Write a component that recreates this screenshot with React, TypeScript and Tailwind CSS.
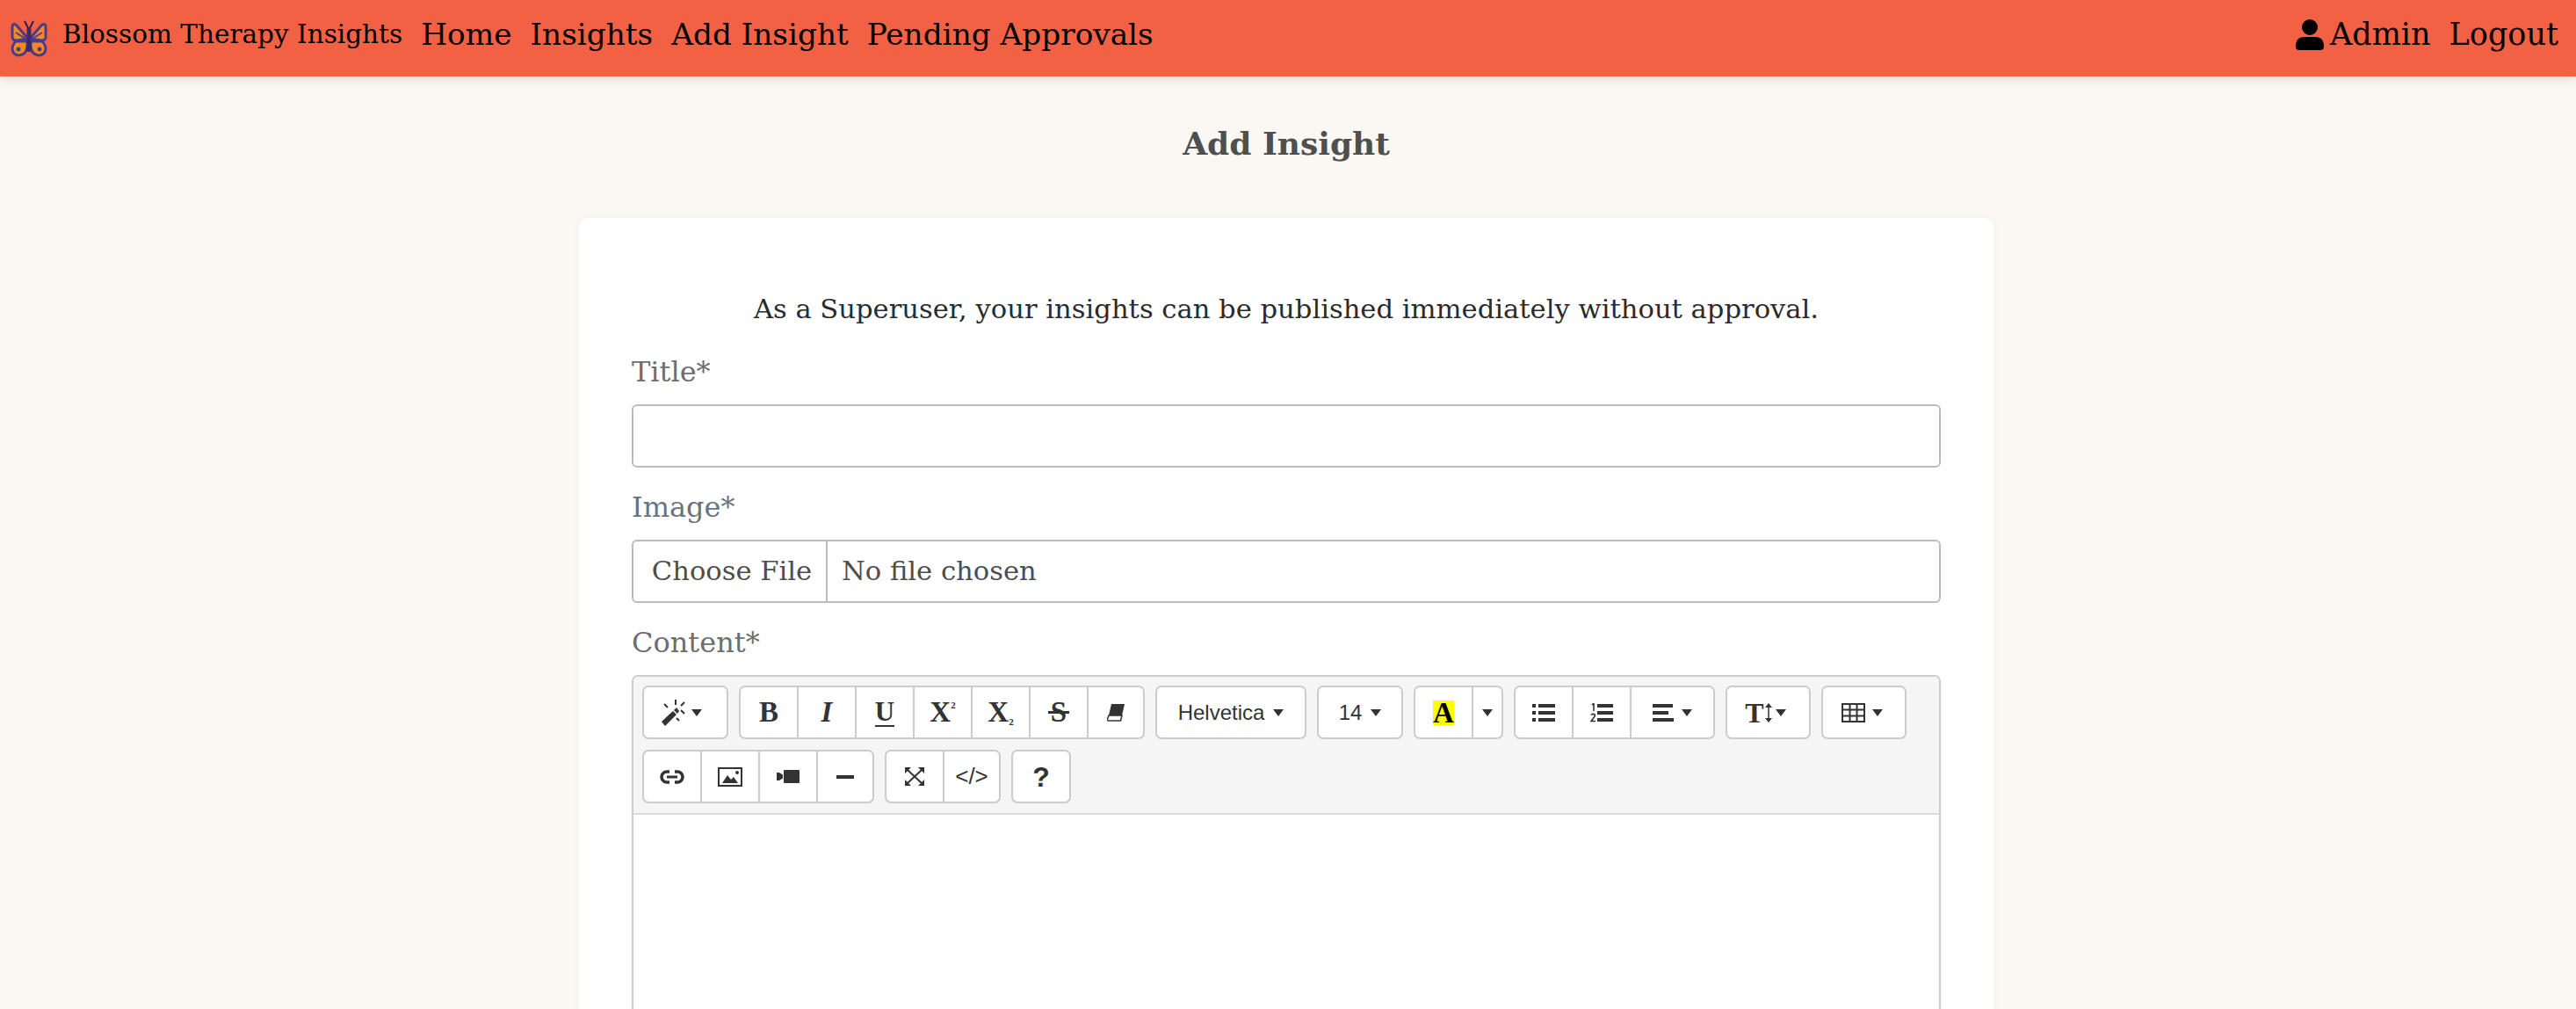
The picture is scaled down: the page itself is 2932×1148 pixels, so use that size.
import React from "react";

const serif = "font-['DejaVu_Serif',serif]";

function Butterfly() {
  return (
    <svg width="42" height="42" viewBox="0 0 42 42" className="shrink-0">
      <path d="M20 21 L6 5 Q2 3 2 8 L2 19 Q2 23 7 23 Z" fill="#f58a1f" stroke="#4b3b8f" strokeWidth="3" strokeLinejoin="round" />
      <path d="M22 21 L36 5 Q40 3 40 8 L40 19 Q40 23 35 23 Z" fill="#f58a1f" stroke="#4b3b8f" strokeWidth="3" strokeLinejoin="round" />
      <path d="M19 24 L6 24 Q2 28 2 33 Q3 40 10 40 Q18 39 19 30 Z" fill="#f58a1f" stroke="#4b3b8f" strokeWidth="3" strokeLinejoin="round" />
      <path d="M23 24 L36 24 Q40 28 40 33 Q39 40 32 40 Q24 39 23 30 Z" fill="#f58a1f" stroke="#4b3b8f" strokeWidth="3" strokeLinejoin="round" />
      <circle cx="9" cy="33" r="2.5" fill="#4b3b8f" />
      <circle cx="33" cy="33" r="2.5" fill="#4b3b8f" />
      <path d="M6 14 L17 21 M36 14 L25 21" stroke="#4b3b8f" strokeWidth="2" />
      <rect x="18.5" y="8" width="5" height="28" rx="2.5" fill="#3b2a6b" />
      <path d="M20 9 L16 1 M22 9 L26 1" stroke="#2d2350" strokeWidth="2" fill="none" />
    </svg>
  );
}

function Caret() {
  return (
    <svg width="12" height="8" viewBox="0 0 12 8" className="shrink-0">
      <polygon points="0,0 12,0 6,8" fill="#333" />
    </svg>
  );
}

function Group({ children, className = "" }: { children: React.ReactNode; className?: string }) {
  return <div className={`flex h-[61px] rounded-[7px] border-2 border-[#ccc] bg-white text-[#333] ${className}`}>{children}</div>;
}

function Btn({ children, className = "" }: { children: React.ReactNode; className?: string }) {
  return <div className={`flex h-full shrink-0 items-center justify-center ${className}`}>{children}</div>;
}

const iconText = "font-['Liberation_Serif',serif] font-bold text-[#333] leading-none";

function ListUl() {
  return (
    <svg width="26" height="20" viewBox="0 0 26 20">
      <path d="M0 0h4v4H0zM0 8h4v4H0zM0 16h4v4H0zM7 0h19v4H7zM7 8h19v4H7zM7 16h19v4H7z" fill="#333" />
    </svg>
  );
}
function ListOl() {
  return (
    <svg width="26" height="22" viewBox="0 0 26 22">
      <path d="M8 1h18v4H8zM8 9h18v4H8zM8 17h18v4H8z" fill="#333" />
      <path d="M2 2l2-1.5V9M1 13.5Q3 11.5 5 13q1 1.500-1 3.500L1 20.500h5" stroke="#333" strokeWidth="1.600" fill="none" />
    </svg>
  );
}

export default function App() {
  return (
    <div className={`h-[1148px] overflow-hidden bg-[#fbf8f3] ${serif}`}>
      <nav className="relative z-10 flex h-[87px] items-center justify-between bg-[#f26144] pb-[8px] pl-[12px] pr-[20px] text-black shadow-[0_4px_12px_rgba(0,0,0,0.1)]">
        <div className="flex items-center">
          <span className="mt-[8px]"><Butterfly /></span>
          <span className="ml-[17px] text-[29.500px]">Blossom Therapy Insights</span>
          <div className="ml-[21px] flex gap-[21px] text-[34.300px]">
            <span>Home</span>
            <span>Insights</span>
            <span>Add Insight</span>
            <span>Pending Approvals</span>
          </div>
        </div>
        <div className="flex items-center text-[35px]">
          <svg width="32" height="35" viewBox="0 0 32 35" className="mr-[7px]">
            <circle cx="16" cy="9" r="9" fill="#000" />
            <path d="M0 31 Q0 20 10 20 L22 20 Q32 20 32 31 Q32 35 28 35 L4 35 Q0 35 0 31Z" fill="#000" />
          </svg>
          <span>Admin</span>
          <span className="ml-[21px]">Logout</span>
        </div>
      </nav>

      <main className="pr-[4px]">
        <h1 className="mt-[52px] text-center text-[36px] leading-[48px] font-bold text-[#4f4f4f]">Add Insight</h1>
        <div className="mx-auto mt-[61px] h-[1000px] w-[1610px] rounded-[10px] bg-white px-[60px] pt-[80px] shadow-[0_2px_8px_rgba(0,0,0,0.05)]">
          <p className="text-center text-[30.600px] leading-[48px] text-[#2b2b2b]">As a Superuser, your insights can be published immediately without approval.</p>

          <div className="mt-[23px]">
            <div className="mb-[13px] text-[32px] leading-[48px] text-[#6e6e6e]">Title*</div>
            <div className="h-[72px] rounded-[6px] border-2 border-[#bbb] bg-white" />
          </div>

          <div className="mt-[21px]">
            <div className="mb-[13px] text-[32px] leading-[48px] text-[#6b7280]">Image*</div>
            <div className="flex h-[72px] items-center rounded-[6px] border-2 border-[#bbb] bg-white text-[30.600px] text-[#4d4d4d]">
              <div className="flex h-full w-[221px] items-center justify-center border-r-2 border-[#bbb] pl-[5px]">Choose File</div>
              <span className="ml-[16px]">No file chosen</span>
            </div>
          </div>

          <div className="mt-[21px]">
            <div className="mb-[13px] text-[32px] leading-[48px] text-[#6e6e6e]">Content*</div>
            <div className="h-[600px] rounded-[7px] border-2 border-[#ccc] bg-white">
              <div className="flex h-[157px] flex-col gap-[12px] rounded-t-[6px] border-b-2 border-[#ddd] bg-[#f5f5f5] pl-[10px] pt-[10px]">
                <div className="flex gap-[12px]">
                  <Group>
                    <Btn className="w-[94px] gap-[6px] pr-[10px]">
                      <svg width="30" height="30" viewBox="0 0 30 30">
                        <path d="M2 25 L15 13 L19 17 L6 30 Z M16 12 L19 9 L22 13 L20 16Z" fill="#333" />
                        <path d="M18 0v6M5 5l4 4M28 3l-4 4M28 16l-4-4M22 24l-3-3" stroke="#333" strokeWidth="2" />
                      </svg>
                      <Caret />
                    </Btn>
                  </Group>
                  <Group>
                    <Btn className="w-[64px]"><span className={`${iconText} text-[33px]`}>B</span></Btn>
                    <Btn className="w-[66px] border-l-2 border-[#ccc]"><span className={`${iconText} text-[33px] italic`}>I</span></Btn>
                    <Btn className="w-[66px] border-l-2 border-[#ccc]"><span className={`${iconText} border-b-2 border-[#333] text-[31px]`}>U</span></Btn>
                    <Btn className="w-[66px] border-l-2 border-[#ccc]"><span className={`${iconText} flex items-start text-[33px]`}>X<span className="text-[11px] leading-[16px]">2</span></span></Btn>
                    <Btn className="w-[66px] border-l-2 border-[#ccc]"><span className={`${iconText} flex items-end text-[33px]`}>X<span className="text-[11px] leading-[11px]">2</span></span></Btn>
                    <Btn className="relative w-[66px] border-l-2 border-[#ccc]">
                      <span className={`${iconText} text-[33px]`}>S</span>
                      <span className="absolute left-[20px] top-[27px] h-[3px] w-[24px] bg-[#333]" />
                    </Btn>
                    <Btn className="w-[64px] border-l-2 border-[#ccc]">
                      <svg width="20" height="20" viewBox="0 0 20 20">
                        <path d="M5 0 L20 0 L17 13 L2 13 Z" fill="#333" />
                        <path d="M2 13 L17 13 L15.500 19 L2 19 Q0 19 0.500 17 Z" fill="#fff" stroke="#333" strokeWidth="1.500" />
                      </svg>
                    </Btn>
                  </Group>
                  <Group>
                    <Btn className="w-[168px] gap-[10px] font-['Liberation_Sans',sans-serif] text-[24px]">Helvetica<Caret /></Btn>
                  </Group>
                  <Group>
                    <Btn className="w-[94px] gap-[10px] font-['Liberation_Sans',sans-serif] text-[24px]">14<Caret /></Btn>
                  </Group>
                  <Group>
                    <Btn className="w-[64px]">
                      <span className="flex h-[28px] w-[24px] items-end justify-center bg-[#ff0] font-['Liberation_Serif',serif] text-[33px] leading-[28px] font-bold text-black">A</span>
                    </Btn>
                    <Btn className="w-[34px] border-l-2 border-[#ccc]"><Caret /></Btn>
                  </Group>
                  <Group>
                    <Btn className="w-[64px]"><ListUl /></Btn>
                    <Btn className="w-[66px] border-l-2 border-[#ccc]"><ListOl /></Btn>
                    <Btn className="w-[95px] gap-[9px] border-l-2 border-[#ccc]">
                      <svg width="24" height="20" viewBox="0 0 24 20"><path d="M0 0h23v4H0zM0 8h18v4H0zM0 16h24v4H0z" fill="#333" /></svg>
                      <Caret />
                    </Btn>
                  </Group>
                  <Group>
                    <Btn className="w-[93px] gap-[4px] pr-[6px]">
                      <span className={`${iconText} text-[32px]`}>T</span>
                      <svg width="8" height="22" viewBox="0 0 8 22" className="-ml-[3px]"><path d="M4 3v16" stroke="#333" strokeWidth="1.500" /><path d="M0 5 L4 0 L8 5Z M0 17 L4 22 L8 17Z" fill="#333" /></svg>
                      <Caret />
                    </Btn>
                  </Group>
                  <Group>
                    <Btn className="w-[93px] gap-[8px] pr-[4px]">
                      <svg width="27" height="22" viewBox="0 0 27 22">
                        <path d="M1 1h25v20H1zM1 7.500h25M1 14.500h25M9.500 1v20M17.500 1v20" stroke="#333" strokeWidth="2" fill="none" />
                      </svg>
                      <Caret />
                    </Btn>
                  </Group>
                </div>
                <div className="flex gap-[12px]">
                  <Group>
                    <Btn className="w-[64px]">
                      <svg width="28" height="16" viewBox="0 0 28 16">
                        <path d="M11 2H8a6 6 0 0 0 0 12h3M17 2h3a6 6 0 0 1 0 12h-3" stroke="#333" strokeWidth="3.500" fill="none" />
                        <path d="M8 8h12" stroke="#333" strokeWidth="3" />
                      </svg>
                    </Btn>
                    <Btn className="w-[66px] border-l-2 border-[#ccc]">
                      <svg width="28" height="22" viewBox="0 0 28 22">
                        <rect x="1" y="1" width="26" height="20" stroke="#333" strokeWidth="2" fill="none" />
                        <circle cx="22" cy="6" r="2" fill="#333" />
                        <path d="M5 18 L11 9 L15 14 L18 11 L23 18Z" fill="#333" />
                      </svg>
                    </Btn>
                    <Btn className="w-[66px] border-l-2 border-[#ccc]">
                      <svg width="26" height="15" viewBox="0 0 26 15">
                        <path d="M0 3 H3 L7 5.500 V9.500 L3 12 H0 Z" fill="#333" />
                        <rect x="8" y="0" width="18" height="15" rx="1" fill="#333" />
                      </svg>
                    </Btn>
                    <Btn className="w-[64px] border-l-2 border-[#ccc]">
                      <svg width="20" height="4" viewBox="0 0 20 4"><rect width="20" height="4" fill="#333" /></svg>
                    </Btn>
                  </Group>
                  <Group>
                    <Btn className="w-[64px]">
                      <svg width="22" height="21" viewBox="0 0 22 21">
                        <path d="M0 0h7L0 7zM22 0h-7L22 7zM0 21h7L0 14zM22 21h-7L22 14z" fill="#333" />
                        <path d="M3 3 L19 18 M19 3 L3 18" stroke="#333" strokeWidth="2" />
                      </svg>
                    </Btn>
                    <Btn className="w-[64px] border-l-2 border-[#ccc] font-['Liberation_Sans',sans-serif] text-[26px] text-[#333]">&lt;/&gt;</Btn>
                  </Group>
                  <Group>
                    <Btn className="w-[64px] font-['Liberation_Sans',sans-serif] text-[32px] font-bold text-[#333]">?</Btn>
                  </Group>
                </div>
              </div>
            </div>
          </div>
        </div>
      </main>
    </div>
  );
}
